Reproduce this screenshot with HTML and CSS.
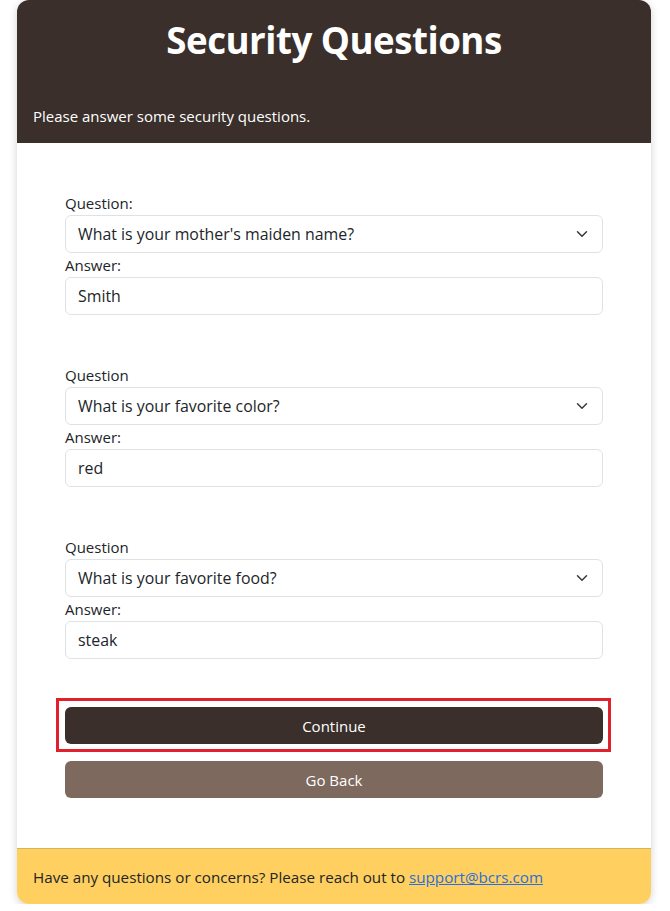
FILE: index.html
```html
<!DOCTYPE html>
<html lang="en">
<head>
<meta charset="utf-8">
<title>Security Questions</title>
<link rel="stylesheet" href="styles.css">
</head>
<body>
<div class="card">
  <div class="card-header">
    <h1 class="title">Security Questions</h1>
    <p class="subtitle">Please answer some security questions.</p>
  </div>
  <form class="card-body">
    <div class="group">
      <label class="label">Question:</label>
      <div class="select">What is your mother's maiden name?<svg class="chev" viewBox="0 0 16 16" width="16" height="16"><path d="M2 5l6 6 6-6" fill="none" stroke="#343a40" stroke-width="2" stroke-linecap="round" stroke-linejoin="round"/></svg></div>
      <label class="label">Answer:</label>
      <div class="input">Smith</div>
    </div>
    <div class="group">
      <label class="label">Question</label>
      <div class="select">What is your favorite color?<svg class="chev" viewBox="0 0 16 16" width="16" height="16"><path d="M2 5l6 6 6-6" fill="none" stroke="#343a40" stroke-width="2" stroke-linecap="round" stroke-linejoin="round"/></svg></div>
      <label class="label">Answer:</label>
      <div class="input">red</div>
    </div>
    <div class="group">
      <label class="label">Question</label>
      <div class="select">What is your favorite food?<svg class="chev" viewBox="0 0 16 16" width="16" height="16"><path d="M2 5l6 6 6-6" fill="none" stroke="#343a40" stroke-width="2" stroke-linecap="round" stroke-linejoin="round"/></svg></div>
      <label class="label">Answer:</label>
      <div class="input">steak</div>
    </div>
    <div class="actions">
      <div class="highlight">
        <button type="button" class="btn btn-primary">Continue</button>
      </div>
      <button type="button" class="btn btn-secondary">Go Back</button>
    </div>
  </form>
  <div class="card-footer">Have any questions or concerns? Please reach out to <a href="#" class="link">support@bcrs.com</a></div>
</div>
</body>
</html>
```
FILE: styles.css
```css
html, body {
  margin: 0;
  padding: 0;
  background: #ffffff;
}
body {
  font-family: "Open Sans", "Noto Sans", sans-serif;
  font-size: 15px;
  line-height: 24px;
  color: #212529;
}
.card {
  width: 634px;
  margin: 0 0 0 17px;
  border-radius: 12px;
  overflow: hidden;
  box-shadow: 0 2px 8px rgba(0, 0, 0, 0.18);
  background: #fff;
}
.card-header {
  background: #3a2f2a;
  color: #fff;
  padding: 16px 16px 15px;
}
.title {
  margin: 0;
  text-align: center;
  font-size: 36.7px;
  line-height: 48px;
  font-weight: 700;
  letter-spacing: -0.5px;
  height: 88px;
}
.subtitle {
  margin: 0;
  font-size: 15px;
  line-height: 24px;
}
.card-body {
  padding: 48px 48px 50px;
  display: flex;
  flex-direction: column;
}
.group {
  display: flex;
  flex-direction: column;
  margin-bottom: 48px;
}
.label {
  display: block;
  line-height: 24px;
}
.select, .input {
  box-sizing: border-box;
  height: 38px;
  border: 1px solid #dee2e6;
  border-radius: 6px;
  padding: 6px 12px;
  font-size: 15.9px;
  line-height: 24px;
  color: #212529;
  background: #fff;
}
.select {
  display: flex;
  align-items: center;
  justify-content: space-between;
  padding-right: 12px;
}
.chev {
  width: 12px;
  height: 12px;
  margin-right: 2px;
}
.actions {
  display: flex;
  flex-direction: column;
  gap: 17px;
}
.highlight {
  display: flex;
  flex-direction: column;
  border: 3px solid #e0202b;
  padding: 6px 5px 5px 6px;
  margin: -9px -8px -8px -9px;
}
.btn {
  font-family: inherit;
  font-size: 15px;
  line-height: 24px;
  height: 37px;
  border: none;
  border-radius: 6px;
  color: #fff;
  padding: 6px 12px;
  cursor: pointer;
}
.btn-primary {
  background: #3a2f2a;
}
.btn-secondary {
  background: #7d695e;
}
.card-footer {
  background: #ffd05f;
  border-top: 1px solid #d6b55a;
  padding: 16px 16px 15px;
  font-size: 15.2px;
  line-height: 24px;
  color: #212529;
}
.link {
  color: #2a6fdb;
  text-decoration: underline;
}
```
